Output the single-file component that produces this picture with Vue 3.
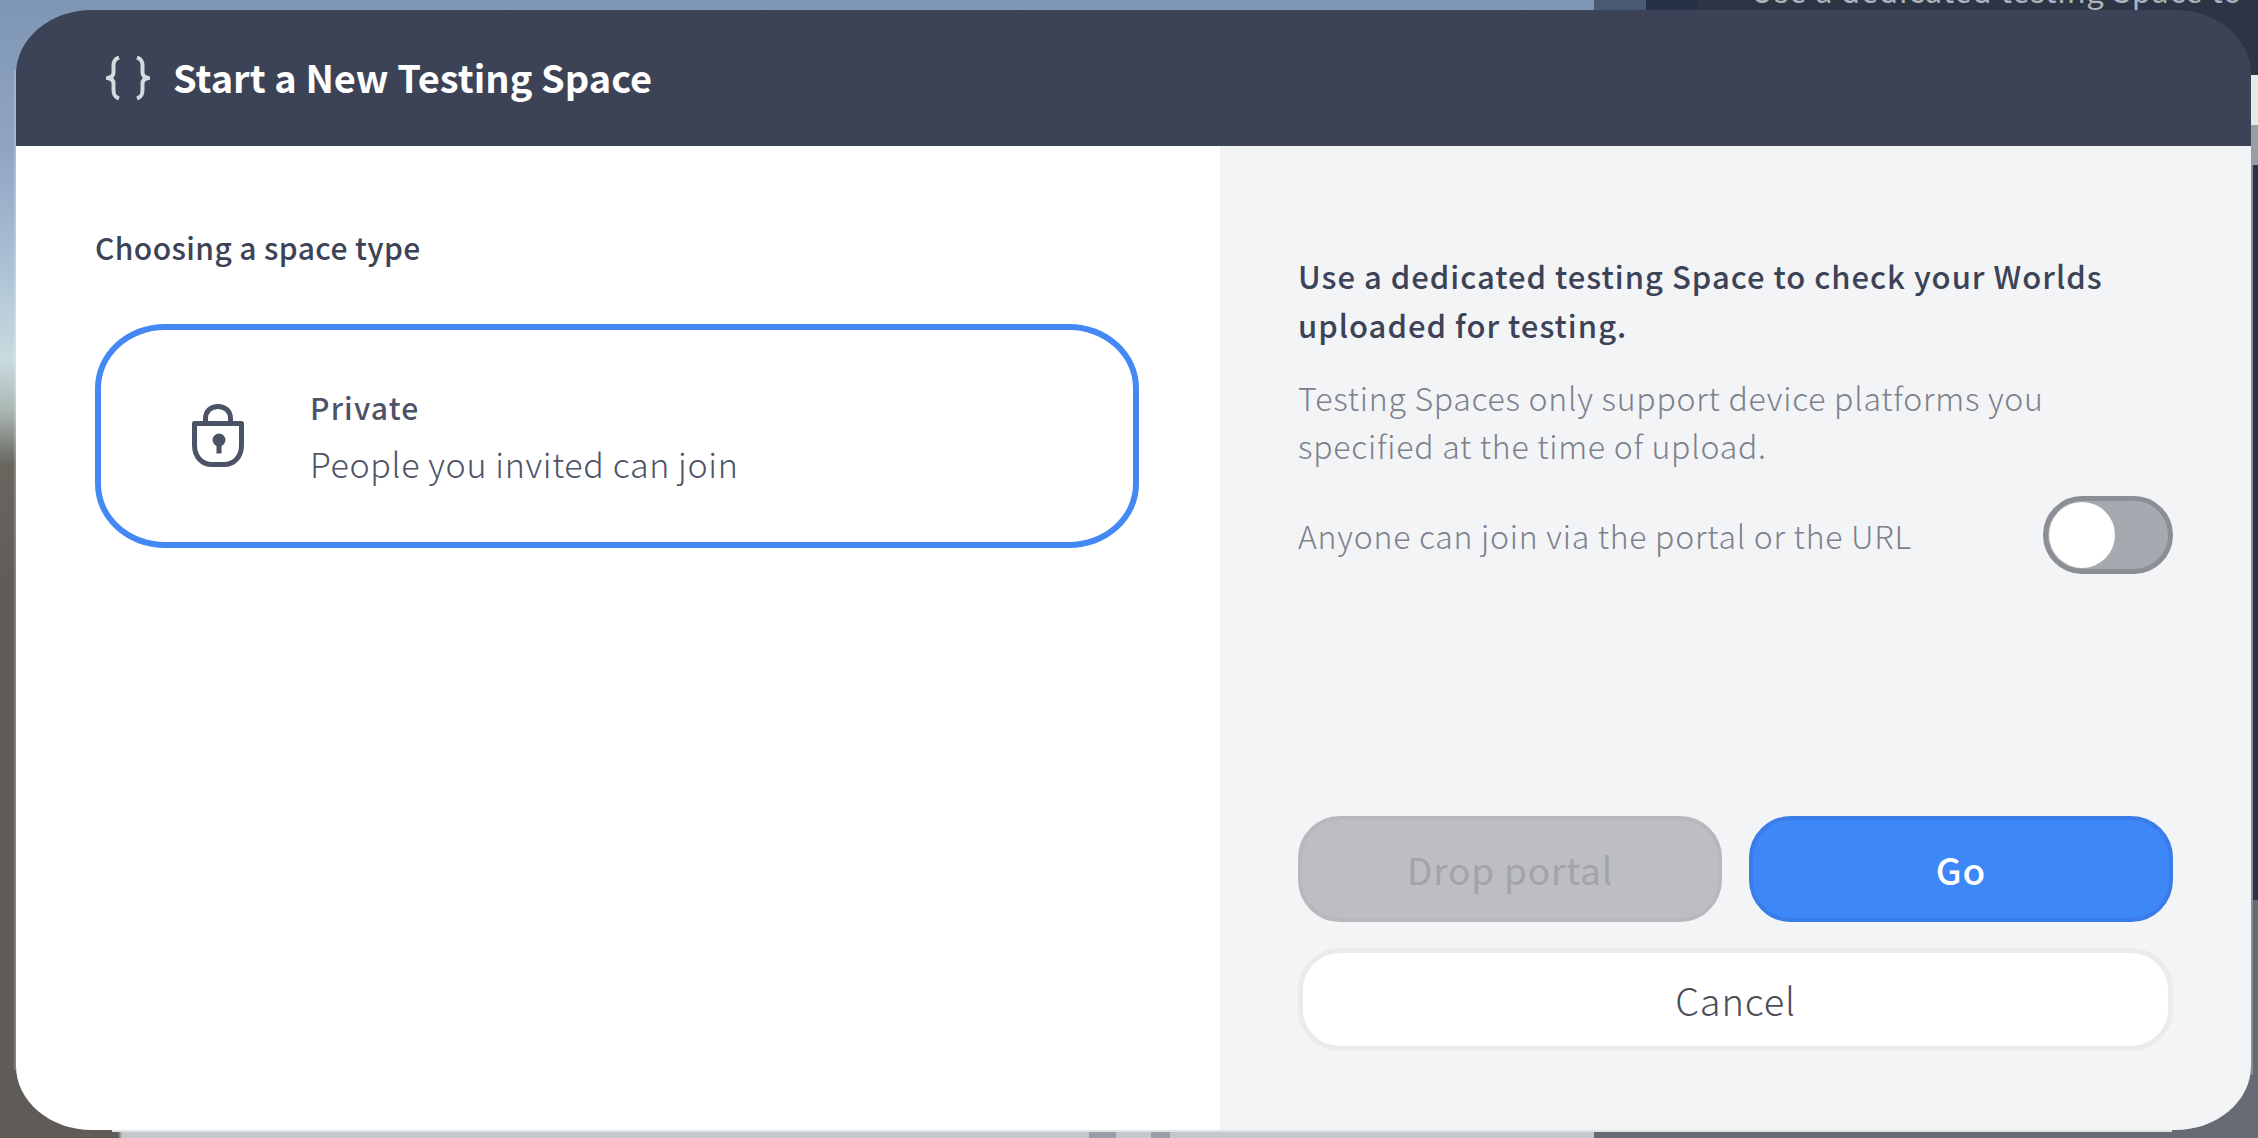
<script setup>
const privateOption = { title: 'Private', description: 'People you invited can join' }
</script>

<template>
  <div class="stage">
    <div class="ghost-text">Use a dedicated testing Space to</div>
    <section class="modal">
      <header class="modal-head">
        <svg class="braces" viewBox="0 0 44 44" width="44" height="44" fill="none" stroke="currentColor" stroke-width="4" stroke-linejoin="round">
          <path d="M13 1.500C8.500 3 7.500 5.500 7.500 10v6.500C7.500 19.500 5.500 21.500 1.500 22C5.500 22.500 7.500 24.500 7.500 27.500V34C7.500 38.500 8.500 41 13 42.500" />
          <path d="M31 1.500C35.500 3 36.500 5.500 36.500 10v6.500C36.500 19.500 38.500 21.500 42.500 22C38.500 22.500 36.500 24.500 36.500 27.500V34C36.500 38.500 35.500 41 31 42.500" />
        </svg>
        <h1 class="modal-title">Start a New Testing Space</h1>
      </header>
      <div class="modal-body">
        <div class="pane-left">
          <p class="section-label">Choosing a space type</p>
          <div class="option-card">
            <svg class="lock" viewBox="0 0 52 63" width="52" height="63" fill="none">
              <path d="M13.500 20V14.500C13.500 7 19 2.500 26 2.500S38.500 7 38.500 14.500V20" stroke="#4d5366" stroke-width="5" />
              <path d="M2.500 19.500H49.500V41C49.500 53 42 60.500 32 60.500H20C10 60.500 2.500 53 2.500 41Z" stroke="#4d5366" stroke-width="5" stroke-linejoin="round" />
              <circle cx="27" cy="36" r="6.500" fill="#4d5366" />
              <rect x="24.500" y="37" width="5" height="12.500" fill="#4d5366" />
            </svg>
            <div class="option-text">
              <div class="option-title">{{ privateOption.title }}</div>
              <div class="option-desc">{{ privateOption.description }}</div>
            </div>
          </div>
        </div>
        <aside class="pane-right">
          <p class="lead">Use a dedicated testing Space to check your Worlds uploaded for testing.</p>
          <p class="note">Testing Spaces only support device platforms you specified at the time of upload.</p>
          <div class="toggle-row">
            <span class="note">Anyone can join via the portal or the URL</span>
            <span class="toggle"><span class="knob"></span></span>
          </div>
          <div class="actions">
            <div class="action-row">
              <button class="btn btn-disabled">Drop portal</button>
              <button class="btn btn-primary">Go</button>
            </div>
            <button class="btn btn-cancel">Cancel</button>
          </div>
        </aside>
      </div>
    </section>
  </div>
</template>

<style>
html, body { margin: 0; padding: 0; background: #5f5b56; overflow: hidden; }
</style>

<style scoped>
.stage {
  position: relative;
  box-sizing: border-box;
  width: 2258px;
  height: 1138px;
  padding: 10px 7px 8px 16px;
  overflow: hidden;
  font-family: "Noto Sans CJK JP", "Noto Sans", sans-serif;
  background:
    linear-gradient(rgba(255, 255, 255, .22), rgba(255, 255, 255, .22)) 14px 70px / 2px 1000px no-repeat,
    linear-gradient(#8b8e95, #8b8e95) 2251px 165px / 2px 910px no-repeat,
    linear-gradient(#e0e2e5, #e0e2e5) 112px 1130px / 2060px 2px no-repeat,
    linear-gradient(90deg, transparent 1594px, #4a5a75 1594px 1646px, #263146 1646px 1698px, #2d3445 1698px) top left / 100% 10px no-repeat,
    linear-gradient(180deg, #2d3445 0 75px, #e6e8ea 75px 125px, #9a9da5 125px 165px, #2b3348 165px 900px, #666a72 900px) top right / 160px 100% no-repeat,
    linear-gradient(90deg, transparent 118px, #c4c8cb 122px 1089px, #9a9ca8 1089px 1116px, #c4c8cb 1116px 1151px, #9a9ca8 1151px 1170px, #c4c8cb 1170px 1594px, #666a72 1594px) bottom left / 100% 8px no-repeat,
    linear-gradient(180deg, #7e95b5 0, #8fa6c3 150px, #a9bfd4 260px, #cadce0 360px, #aab7b4 410px, #696660 464px, #5f5b56 600px);
}
.ghost-text {
  position: absolute;
  left: 1751px;
  top: -32px;
  font-size: 31px;
  line-height: 44px;
  font-weight: 400;
  letter-spacing: 0.8px;
  color: #aeb2ba;
  white-space: nowrap;
}
.modal {
  position: relative;
  display: flex;
  flex-direction: column;
  height: 100%;
  overflow: hidden;
  border-radius: 76px / 64px;
}
.modal-head {
  flex: none;
  display: flex;
  align-items: center;
  gap: 24px;
  box-sizing: border-box;
  height: 136px;
  padding: 0 0 0 90px;
  background: #3d4356;
  color: #fff;
}
.braces { color: #d6d9dd; flex: none; }
.modal-title {
  margin: -3px 0 0 -1px;
  font-size: 38px;
  font-weight: 700;
  line-height: 1;
  color: #fff;
}
.modal-body { flex: 1; display: flex; min-height: 0; }
.pane-left {
  flex: none;
  box-sizing: border-box;
  width: 1204px;
  padding: 81px 81px 0 79px;
  background: #fff;
}
.section-label {
  margin: 0;
  font-size: 30px;
  line-height: 40px;
  font-weight: 500;
  letter-spacing: 0.4px;
  color: #3d4356;
}
.option-card {
  display: flex;
  align-items: center;
  box-sizing: border-box;
  height: 224px;
  margin-top: 57px;
  padding: 0 0 0 91px;
  border: 6px solid #4388f5;
  border-radius: 70px / 64px;
  background: #fff;
}
.lock { flex: none; margin-top: -2px; }
.option-text { margin-left: 66px; }
.option-title {
  font-size: 30px;
  line-height: 40px;
  font-weight: 500;
  letter-spacing: 1.2px;
  color: #4d5366;
}
.option-desc {
  margin-top: 16px;
  font-size: 34px;
  line-height: 42px;
  font-weight: 300;
  letter-spacing: 0.65px;
  color: #4d5366;
}
.pane-right {
  flex: 1;
  display: flex;
  flex-direction: column;
  box-sizing: border-box;
  padding: 105px 78px 79px 78px;
  background: #f3f4f6;
}
.lead {
  margin: 0;
  font-size: 31px;
  line-height: 49px;
  font-weight: 500;
  letter-spacing: 1px;
  color: #3d4356;
}
.note {
  margin: 0;
  font-size: 32px;
  line-height: 48px;
  font-weight: 300;
  letter-spacing: 0.75px;
  color: #7d818c;
}
.lead + .note { margin-top: 24px; }
.toggle-row {
  display: flex;
  align-items: center;
  justify-content: space-between;
  margin-top: 27px;
}
.toggle {
  display: flex;
  align-items: center;
  box-sizing: border-box;
  width: 130px;
  height: 78px;
  padding-left: 1px;
  border: 5px solid #8d8f96;
  border-radius: 39px;
  background: #a7a9b1;
}
.knob { width: 66px; height: 66px; border-radius: 50%; background: #fff; }
.actions { margin-top: auto; display: flex; flex-direction: column; gap: 26px; }
.action-row { display: flex; gap: 27px; }
.btn {
  box-sizing: border-box;
  display: block;
  font-family: inherit;
  line-height: 1;
  letter-spacing: 0.8px;
  padding: 0;
}
.btn-disabled, .btn-primary { flex: 1; height: 106px; border-radius: 42px; font-size: 37px; }
.btn-disabled {
  border: 4px solid #b7b8bb;
  background: #bdbec1;
  color: #a3a4a9;
  font-weight: 400;
}
.btn-primary {
  border: 4px solid #3a7de8;
  background: #3e87f7;
  color: #fff;
  font-weight: 500;
}
.btn-cancel {
  width: 875px;
  height: 103px;
  margin: 0 auto;
  border: 5px solid #ebebeb;
  border-radius: 42px;
  background: #fff;
  color: #4a4d58;
  font-size: 38px;
  font-weight: 300;
}
</style>
